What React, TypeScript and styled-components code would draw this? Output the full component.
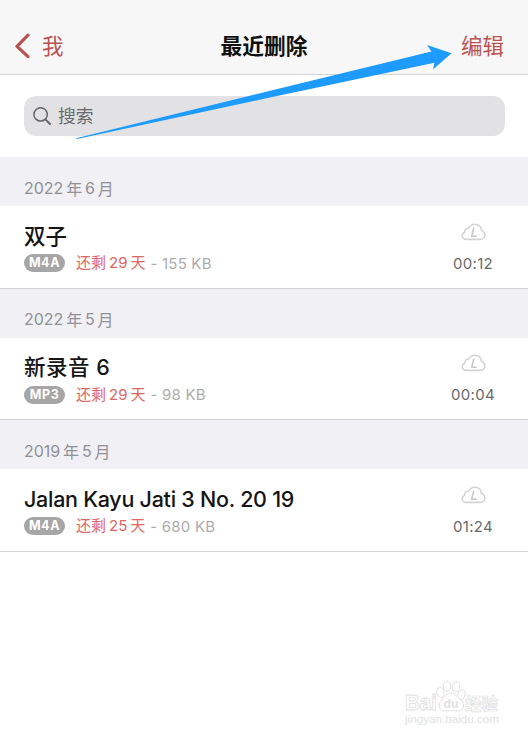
import React from 'react';
import styled, { createGlobalStyle } from 'styled-components';

const GlobalStyle = createGlobalStyle`
  * { box-sizing: border-box; }
  body {
    margin: 0;
    background: #fff;
    font-family: Inter, "Noto Sans CJK SC", sans-serif;
    overflow: hidden;
  }
`;

const Screen = styled.main`
  position: relative;
  width: 528px;
  height: 738px;
  background: #fff;
  overflow: hidden;
`;

const NavBar = styled.header`
  display: grid;
  grid-template-columns: 1fr auto 1fr;
  align-items: center;
  height: 75px;
  padding: 18px 24px 0 14px;
  background: #f7f7f7;
  border-bottom: 1px solid #d4d4d6;
`;

const NavButton = styled.button<{ $end?: boolean }>`
  display: flex;
  align-items: center;
  justify-self: ${(p) => (p.$end ? 'end' : 'start')};
  gap: 12px;
  padding: 0;
  border: 0;
  background: none;
  color: #b95352;
  font: inherit;
  font-size: 21.5px;
  line-height: 30px;
`;

const NavTitle = styled.h1`
  margin: 0 0 0 10px;
  color: #111;
  font-size: 21.7px;
  line-height: 30px;
  font-weight: 600;
`;

const SearchArea = styled.div`
  height: 82px;
  padding: 21px 23px 0 24px;
`;

const SearchField = styled.div`
  display: flex;
  align-items: center;
  gap: 7px;
  height: 40px;
  padding-left: 9px;
  border-radius: 12px;
  background: #e2e2e4;
  color: #69696e;
  font-size: 17.8px;
  line-height: 24px;
`;

const SearchLabel = styled.span`
  padding-top: 1px;
`;

const SectionTitle = styled.h2`
  display: flex;
  align-items: center;
  gap: 2.8px;
  height: 49px;
  margin: 0;
  padding: 12.5px 24px 0;
  background: #f0f0f5;
  color: #919196;
  font-size: 16px;
  font-weight: 400;
`;

const Row = styled.article`
  display: flex;
  justify-content: space-between;
  height: 82.5px;
  padding: 13.9px 33px 0 24px;
  border-bottom: 1px solid #d3d3d5;
`;

const Name = styled.h3<{ $tracking: number }>`
  margin: 0;
  height: 32px;
  color: #151515;
  font-size: 21.5px;
  line-height: 32px;
  font-weight: 500;
  letter-spacing: ${(p) => p.$tracking}px;
  white-space: nowrap;
`;

const Meta = styled.div`
  display: flex;
  align-items: center;
  height: 22px;
  margin-top: 0.3px;
  font-size: 15px;
  line-height: 22px;
  color: #acacae;
  white-space: nowrap;
`;

const Format = styled.span`
  display: flex;
  align-items: center;
  justify-content: center;
  width: 41px;
  height: 18px;
  margin-right: 11px;
  border-radius: 9px;
  background: #a6a6a6;
  color: #fff;
  font-size: 12.5px;
  font-weight: 700;
  letter-spacing: 0.6px;
`;

const Remaining = styled.span`
  display: flex;
  gap: 3px;
  margin-right: 5px;
  color: #dd6661;
`;

const Size = styled.span`
  padding-top: 1px;
  letter-spacing: 0.2px;
`;

const Side = styled.div`
  display: flex;
  flex-direction: column;
  align-items: center;
  width: 44px;
  padding-top: 3.1px;
`;

const Duration = styled.span`
  margin-top: 11.8px;
  color: #69696b;
  font-size: 15px;
  line-height: 22px;
  letter-spacing: 0.35px;
`;

const PointerArrow = styled.svg`
  position: absolute;
  inset: 0;
  pointer-events: none;
`;

const Watermark = styled.div`
  position: absolute;
  left: 404px;
  top: 680px;
  width: 110px;
`;

const BackIcon = () => (
  <svg width="16" height="26" viewBox="0 0 16 26" fill="none" stroke="#b95352" strokeWidth="3.2" strokeLinecap="round" strokeLinejoin="round">
    <path d="M14 2.2 3 13.3 14 23.6" />
  </svg>
);

const SearchIcon = () => (
  <svg width="18" height="18" viewBox="0 0 18 18" fill="none" stroke="#65656b" strokeWidth="1.5" strokeLinecap="round">
    <circle cx="7.6" cy="7.4" r="6.7" />
    <path d="m12.4 12.4 4.6 4.6" strokeWidth="2" />
  </svg>
);

const CloudIcon = () => (
  <svg width="25" height="18" viewBox="0 0 25 18" fill="none" stroke="#d4d4d4" strokeWidth="1.6" strokeLinejoin="round" strokeLinecap="round">
    <path d="M5.5 16.4C2.8 16.4 1.2 14.9 1.2 12.8c0-2 1.2-3.2 2.5-3.6C3.3 6.8 5 5 7.6 5.3 8.7 2.8 11 1.2 14 1.2c3.8 0 6.5 2.7 6.4 6.3 2.2.7 3.5 2.3 3.5 4.4 0 2.6-2 4.5-4.9 4.5Z" />
    <path d="m12.6 5.4-1.9 7.8h4.6" strokeWidth="1.6" stroke="#c8c8c8" />
  </svg>
);

type Recording = {
  year: string;
  month: string;
  name: string;
  tracking: number;
  format: string;
  days: string;
  size: string;
  duration: string;
};

const recordings: Recording[] = [
  { year: '2022', month: '6', name: '双子', tracking: 0, format: 'M4A', days: '29', size: '155 KB', duration: '00:12' },
  { year: '2022', month: '5', name: '新录音 6', tracking: 0.5, format: 'MP3', days: '29', size: '98 KB', duration: '00:04' },
  { year: '2019', month: '5', name: 'Jalan Kayu Jati 3 No. 20 19', tracking: -0.27, format: 'M4A', days: '25', size: '680 KB', duration: '01:24' },
];

const RecordingSection = ({ item }: { item: Recording }) => (
  <section>
    <SectionTitle>
      <span>{item.year}</span><span>年</span><span>{item.month}</span><span>月</span>
    </SectionTitle>
    <Row>
      <div>
        <Name $tracking={item.tracking}>{item.name}</Name>
        <Meta>
          <Format>{item.format}</Format>
          <Remaining><span>还剩</span><span>{item.days}</span><span>天</span></Remaining>
          <Size>- {item.size}</Size>
        </Meta>
      </div>
      <Side>
        <CloudIcon />
        <Duration>{item.duration}</Duration>
      </Side>
    </Row>
  </section>
);

const BaiduMark = () => (
  <Watermark>
    <svg width="110" height="54" viewBox="0 0 110 54" fill="#fff" stroke="#e0e0e0" strokeWidth="1">
      <ellipse cx="36.5" cy="12.5" rx="3.6" ry="4.9" transform="rotate(-12 36.5 12.5)" />
      <ellipse cx="43" cy="6.3" rx="3.7" ry="5" />
      <ellipse cx="52" cy="6.8" rx="3.7" ry="5" transform="rotate(8 52 6.8)" />
      <ellipse cx="57.5" cy="14.5" rx="3.6" ry="4.7" transform="rotate(15 57.5 14.5)" />
      <path d="M47 13c-4 0-6 4-9 7-5 4-3 11 3 11 3 0 8-1 12 0 6 1 9-6 4-11-4-3-6-7-10-7Z" />
      <g fontFamily="Liberation Sans, Noto Sans CJK SC, sans-serif" fontWeight="700">
        <text x="1" y="30" fontSize="21.5" textLength="32" lengthAdjust="spacingAndGlyphs" strokeWidth="0.8">Bai</text>
        <text x="39.5" y="28" fontSize="12.5" textLength="15" lengthAdjust="spacingAndGlyphs" fill="#e0e0e0" stroke="none">du</text>
        <text x="61" y="30" fontSize="16.5" strokeWidth="0.7">经验</text>
        <text x="1" y="43" fontSize="11.5" textLength="94" lengthAdjust="spacingAndGlyphs" fontWeight="400" fill="#e2e2e2" stroke="none">jingyan.baidu.com</text>
      </g>
    </svg>
  </Watermark>
);

export default function App() {
  return (
    <>
      <GlobalStyle />
      <Screen>
        <NavBar>
          <NavButton><BackIcon />我</NavButton>
          <NavTitle>最近删除</NavTitle>
          <NavButton $end>编辑</NavButton>
        </NavBar>
        <SearchArea>
          <SearchField><SearchIcon /><SearchLabel>搜索</SearchLabel></SearchField>
        </SearchArea>
        {recordings.map((item) => (
          <RecordingSection key={item.name} item={item} />
        ))}
        <PointerArrow width="528" height="160" viewBox="0 0 528 160" fill="#1e9bff">
          <path d="M76 138.2 264 92.2 431.5 51.4 427 45l24.5 8.3L433 69.5l1.5-6.7L264 98.8 77 139Z" />
        </PointerArrow>
        <BaiduMark />
      </Screen>
    </>
  );
}
